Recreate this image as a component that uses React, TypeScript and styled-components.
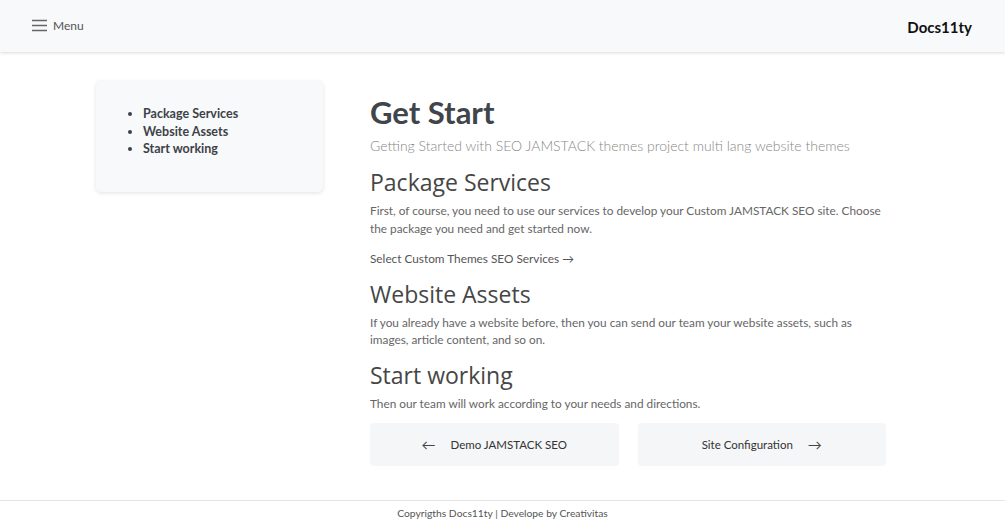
import styled, { createGlobalStyle } from "styled-components";

const GlobalStyle = createGlobalStyle`
  body {
    margin: 0;
    background: #fff;
    font-family: Lato, "Open Sans", sans-serif;
    color: #444;
  }
  * {
    box-sizing: border-box;
  }
`;

const TocItems = ["Package Services", "Website Assets", "Start working"];

const Sections = [
  {
    title: "Package Services",
    text: "First, of course, you need to use our services to develop your Custom JAMSTACK SEO site. Choose the package you need and get started now.",
    link: "Select Custom Themes SEO Services →",
  },
  {
    title: "Website Assets",
    text: "If you already have a website before, then you can send our team your website assets, such as images, article content, and so on.",
  },
  {
    title: "Start working",
    text: "Then our team will work according to your needs and directions.",
  },
];

const MenuIcon = () => (
  <svg width="15" height="13" viewBox="0 0 15 13">
    <path d="M0 1.5h15M0 6.5h15M0 11.5h15" stroke="#666" strokeWidth="1.5" />
  </svg>
);

export default function App() {
  return (
    <>
      <GlobalStyle />
      <Page>
        <Header>
          <MenuButton>
            <MenuIcon />
            <span>Menu</span>
          </MenuButton>
          <Brand>Docs11ty</Brand>
        </Header>
        <Content>
          <Sidebar>
            <TocList>
              {TocItems.map((item) => (
                <li key={item}>{item}</li>
              ))}
            </TocList>
          </Sidebar>
          <Main>
            <Title>Get Start</Title>
            <Lead>
              Getting Started with SEO JAMSTACK themes project multi lang
              website themes
            </Lead>
            {Sections.map((s) => (
              <Section key={s.title}>
                <Heading>{s.title}</Heading>
                <Paragraph>{s.text}</Paragraph>
                {s.link && <TextLink>{s.link}</TextLink>}
              </Section>
            ))}
            <Pager>
              <PagerButton>
                <Arrow>←</Arrow>
                Demo JAMSTACK SEO
              </PagerButton>
              <PagerButton>
                Site Configuration
                <Arrow>→</Arrow>
              </PagerButton>
            </Pager>
          </Main>
        </Content>
        <Footer>Copyrigths Docs11ty | Develope by Creativitas</Footer>
      </Page>
    </>
  );
}

const Page = styled.div`
  min-height: 525px;
  display: flex;
  flex-direction: column;
`;

const Header = styled.header`
  height: 52px;
  padding: 0 32px;
  display: flex;
  align-items: center;
  justify-content: space-between;
  background: #f8f9fa;
  box-shadow: 0 1px 3px rgba(0, 0, 0, 0.15);
`;

const MenuButton = styled.div`
  display: flex;
  align-items: center;
  gap: 6px;
  font-size: 12px;
  color: #555;
  margin-top: -1px;
`;

const Brand = styled.div`
  font-size: 15px;
  font-weight: 700;
  color: #111;
  margin-right: 1px;
  margin-top: 2px;
`;

const Content = styled.div`
  display: flex;
  align-items: flex-start;
  gap: 47px;
  padding: 29px 0 0 96px;
`;

const Sidebar = styled.nav`
  width: 227px;
  height: 111px;
  background: #f8f9fa;
  border-radius: 5px;
  box-shadow: 0 1px 4px rgba(0, 0, 0, 0.12);
  padding: 24px 0 0 0;
`;

const TocList = styled.ul`
  margin: 0;
  padding-left: 47px;
  font-size: 12.5px;
  font-weight: 700;
  line-height: 17.5px;
  color: #3d4248;
`;

const Main = styled.main`
  width: 516px;
`;

const Title = styled.h1`
  margin: 13px 0 0;
  font-size: 31px;
  font-weight: 700;
  line-height: 36px;
  color: #40454b;
`;

const Lead = styled.p`
  margin: 6px 0 0;
  font-size: 14px;
  font-weight: 300;
  line-height: 20px;
  color: #888;
`;

const Section = styled.section`
  margin-top: 11px;
`;

const Heading = styled.h2`
  margin: 0;
  font-family: "Open Sans", sans-serif;
  font-size: 23px;
  font-weight: 500;
  line-height: 30px;
  color: #464646;
`;

const Paragraph = styled.p`
  margin: 5px 0 0;
  font-size: 11.8px;
  line-height: 17.5px;
  color: #666;
`;

const TextLink = styled.p`
  margin: 13px 0 0;
  font-size: 11.8px;
  line-height: 17.5px;
  color: #555;
`;

const Pager = styled.div`
  display: flex;
  gap: 19px;
  margin-top: 11px;
`;

const PagerButton = styled.div`
  flex: 1;
  height: 43px;
  display: flex;
  align-items: center;
  justify-content: center;
  gap: 15px;
  background: #f5f6f8;
  border-radius: 4px;
  font-size: 11.5px;
  color: #333;
`;

const Arrow = styled.span`
  font-size: 14px;
  color: #444;
`;

const Footer = styled.footer`
  margin-top: auto;
  border-top: 1px solid #e4e4e4;
  height: 25px;
  padding-top: 6px;
  text-align: center;
  font-size: 10.3px;
  color: #555;
`;
